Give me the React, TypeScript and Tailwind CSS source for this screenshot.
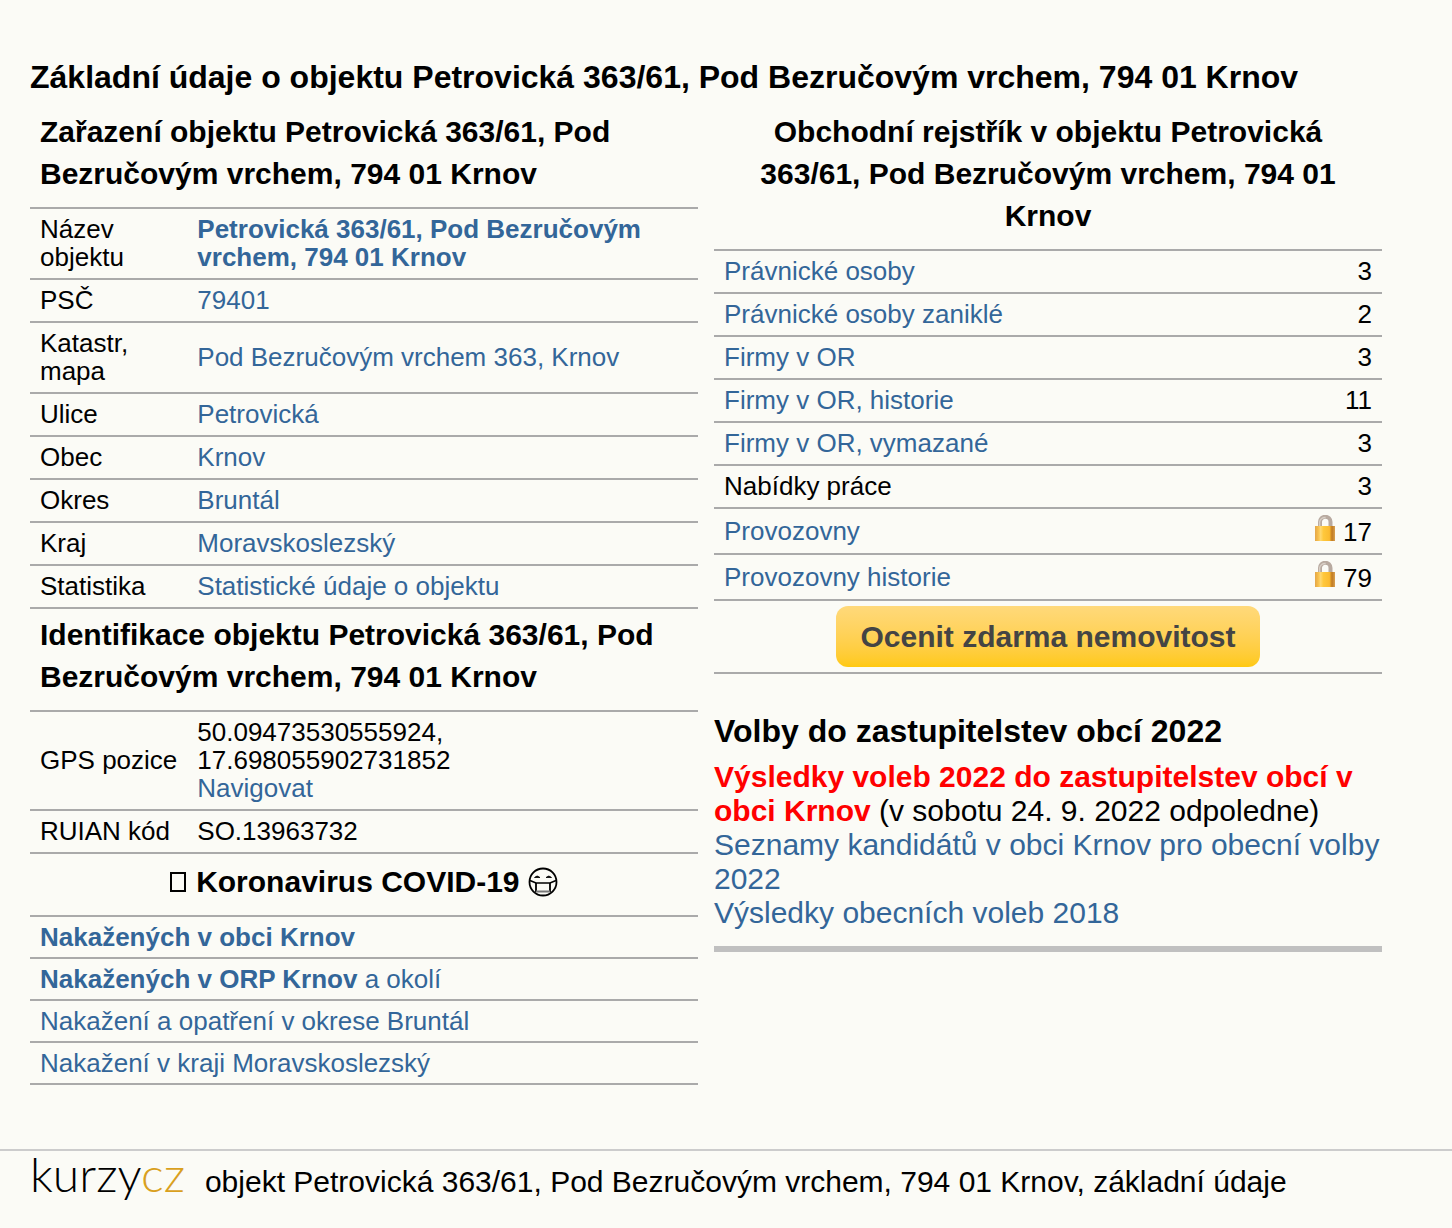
import type { ReactNode } from "react";

const link = "text-[#336699] hover:underline";

const placement: { label: string; value: string; bold?: boolean }[] = [
  { label: "Název objektu", value: "Petrovická 363/61, Pod Bezručovým vrchem, 794 01 Krnov", bold: true },
  { label: "PSČ", value: "79401" },
  { label: "Katastr, mapa", value: "Pod Bezručovým vrchem 363, Krnov" },
  { label: "Ulice", value: "Petrovická" },
  { label: "Obec", value: "Krnov" },
  { label: "Okres", value: "Bruntál" },
  { label: "Kraj", value: "Moravskoslezský" },
  { label: "Statistika", value: "Statistické údaje o objektu" },
];

const register: { label: string; count: number; plain?: boolean; locked?: boolean }[] = [
  { label: "Právnické osoby", count: 3 },
  { label: "Právnické osoby zaniklé", count: 2 },
  { label: "Firmy v OR", count: 3 },
  { label: "Firmy v OR, historie", count: 11 },
  { label: "Firmy v OR, vymazané", count: 3 },
  { label: "Nabídky práce", count: 3, plain: true },
  { label: "Provozovny", count: 17, locked: true },
  { label: "Provozovny historie", count: 79, locked: true },
];

const covid: { strong?: string; text?: string }[] = [
  { strong: "Nakažených v obci Krnov" },
  { strong: "Nakažených v ORP Krnov", text: " a okolí" },
  { text: "Nakažení a opatření v okrese Bruntál" },
  { text: "Nakažení v kraji Moravskoslezský" },
];

function Lock() {
  return (
    <svg className="mr-2 inline-block align-baseline" width="20" height="26" viewBox="0 0 20 26" aria-hidden="true">
      <defs>
        <linearGradient id="lock-body" x1="0" x2="1" y1="0" y2="0">
          <stop offset="0" stopColor="#e3a64a" />
          <stop offset="0.15" stopColor="#f6bd4a" />
          <stop offset="0.28" stopColor="#ffd870" />
          <stop offset="0.42" stopColor="#ffc83c" />
          <stop offset="0.72" stopColor="#fbbb30" />
          <stop offset="0.85" stopColor="#c07a22" />
          <stop offset="1" stopColor="#d9a050" />
        </linearGradient>
      </defs>
      <path d="M5 13V7a5 5 0 0 1 10.500 0V13" fill="none" stroke="#b8aaa0" strokeWidth="4" />
      <path d="M4.600 12V7a5.400 5.400 0 0 1 6-4.500" fill="none" stroke="#d8cfc6" strokeWidth="1.400" />
      <rect y="11" width="20" height="15" fill="url(#lock-body)" />
    </svg>
  );
}

function MaskFace() {
  return (
    <svg className="mt-2 inline-block align-[-5px]" width="30" height="30" viewBox="0 0 30 30" fill="none" stroke="#000" aria-hidden="true">
      <circle cx="15" cy="15" r="13.500" strokeWidth="1.800" />
      <path d="M6.500 10.500Q9 7.500 12 10.500ZM18 10.500Q21 7.500 23.500 10.500Z" fill="#000" strokeWidth="0.800" />
      <path d="M2 13.500L8 16H22L28 13.500" strokeWidth="1.600" />
      <path d="M8 16V25M22 16V25" strokeWidth="1.800" />
      <path d="M8 24.500H22" stroke="#777" strokeWidth="2" />
    </svg>
  );
}

function Heading({ children, center = false }: { children: ReactNode; center?: boolean }) {
  return (
    <tr className="border-b-2 border-[#aaaaaa]">
      <th
        colSpan={2}
        className={`px-[10px] pt-[5px] pb-3 text-[30px] leading-[42px] font-bold ${center ? "text-center" : "text-left"}`}
      >
        {children}
      </th>
    </tr>
  );
}

function Row({ children }: { children: ReactNode }) {
  return <tr className="border-b-2 border-[#aaaaaa]">{children}</tr>;
}

const cell = "px-[10px] pt-[6px] pb-[7px]";

export default function App() {
  return (
    <div className="flex min-h-screen flex-col bg-[#fbfbf6] font-['Liberation_Sans',Arial,sans-serif] text-black">
      <main className="pt-14 pr-[70px] pl-[30px]">
        <h1 className="text-[32px] leading-[42px] font-bold">
          Základní údaje o objektu Petrovická 363/61, Pod Bezručovým vrchem, 794 01 Krnov
        </h1>

        <div className="mt-2 grid grid-cols-2 items-start gap-4">
          <table className="w-full border-collapse text-[26px] leading-[28px]">
            <tbody>
              <Heading>Zařazení objektu Petrovická 363/61, Pod Bezručovým vrchem, 794 01 Krnov</Heading>
              {placement.map((item) => (
                <Row key={item.label}>
                  <td className={`${cell} w-[157px]`}>{item.label}</td>
                  <td className={cell}>
                    <a href="#" className={item.bold ? `${link} font-bold` : link}>{item.value}</a>
                  </td>
                </Row>
              ))}
              <Heading>Identifikace objektu Petrovická 363/61, Pod Bezručovým vrchem, 794 01 Krnov</Heading>
              <Row>
                <td className={`${cell} whitespace-nowrap`}>GPS pozice</td>
                <td className={cell}>
                  50.09473530555924,
                  <br />
                  17.698055902731852
                  <br />
                  <a href="#" className={link}>Navigovat</a>
                </td>
              </Row>
              <Row>
                <td className={`${cell} whitespace-nowrap`}>RUIAN kód</td>
                <td className={cell}>SO.13963732</td>
              </Row>
              <Heading center>
                <span className="mr-[10px] inline-block h-5 w-4 border-2 border-black" aria-hidden="true" />
                Koronavirus COVID-19 <MaskFace />
              </Heading>
              {covid.map((item, i) => (
                <Row key={i}>
                  <td colSpan={2} className="px-[10px] py-[6px]">
                    <a href="#" className={link}>
                      {item.strong && <b>{item.strong}</b>}
                      {item.text}
                    </a>
                  </td>
                </Row>
              ))}
            </tbody>
          </table>

          <div>
            <table className="w-full border-collapse text-[26px] leading-[28px]">
              <tbody>
                <Heading center>Obchodní rejstřík v objektu Petrovická 363/61, Pod Bezručovým vrchem, 794 01 Krnov</Heading>
                {register.map((item) => (
                  <Row key={item.label}>
                    <td className={cell}>
                      {item.plain ? item.label : <a href="#" className={link}>{item.label}</a>}
                    </td>
                    <td className={`${cell} text-right whitespace-nowrap`}>
                      {item.locked && <Lock />}
                      {item.count}
                    </td>
                  </Row>
                ))}
                <Row>
                  <td colSpan={2} className="py-[5px] text-center">
                    <button
                      type="button"
                      className="rounded-xl bg-linear-to-b from-[#ffd97a] to-[#ffc90e] px-6 py-3 text-[30px] leading-[37px] font-bold text-[#444444]"
                    >
                      Ocenit zdarma nemovitost
                    </button>
                  </td>
                </Row>
              </tbody>
            </table>

            <section className="mt-9 border-b-[6px] border-[#c0c0c0] pb-4 text-[30px] leading-[34px]">
              <h2 className="mb-2 text-[32px] leading-[42px] font-bold">Volby do zastupitelstev obcí 2022</h2>
              <p>
                <a href="#" className="font-bold text-[#ff0000] hover:underline">
                  Výsledky voleb 2022 do zastupitelstev obcí v obci Krnov
                </a>{" "}
                (v sobotu 24. 9. 2022 odpoledne)
              </p>
              <p>
                <a href="#" className={link}>Seznamy kandidátů v obci Krnov pro obecní volby 2022</a>
              </p>
              <p>
                <a href="#" className={link}>Výsledky obecních voleb 2018</a>
              </p>
            </section>
          </div>
        </div>
      </main>

      <footer className="mt-auto flex items-baseline gap-5 border-t-2 border-[#cccccc] px-[30px] pt-[3px] pb-[29px]">
        <a href="#" className="font-['Lato',sans-serif] text-5xl leading-[40px] font-light">
          kurzy<span className="text-[#d9a01e]">cz</span>
        </a>
        <p className="text-[30px] leading-[34px]">
          objekt Petrovická 363/61, Pod Bezručovým vrchem, 794 01 Krnov, základní údaje
        </p>
      </footer>
    </div>
  );
}
